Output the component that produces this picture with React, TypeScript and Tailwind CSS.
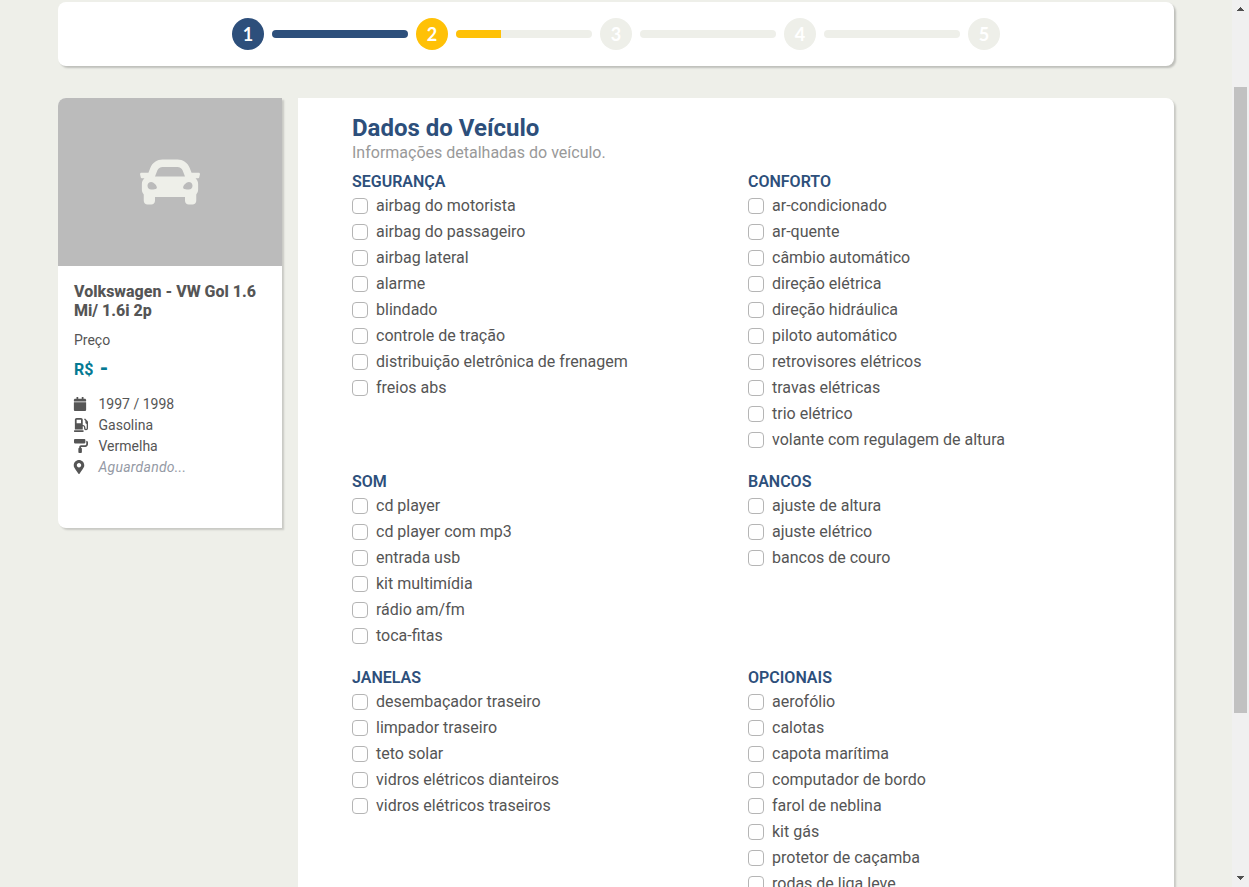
import { FaCalendar, FaCar, FaGasPump, FaMapMarkerAlt, FaPaintRoller } from "react-icons/fa";

const SECTIONS: { title: string; items: string[] }[] = [
  {
    title: "SEGURANÇA",
    items: ["airbag do motorista", "airbag do passageiro", "airbag lateral", "alarme", "blindado", "controle de tração", "distribuição eletrônica de frenagem", "freios abs"],
  },
  {
    title: "CONFORTO",
    items: ["ar-condicionado", "ar-quente", "câmbio automático", "direção elétrica", "direção hidráulica", "piloto automático", "retrovisores elétricos", "travas elétricas", "trio elétrico", "volante com regulagem de altura"],
  },
  { title: "SOM", items: ["cd player", "cd player com mp3", "entrada usb", "kit multimídia", "rádio am/fm", "toca-fitas"] },
  { title: "BANCOS", items: ["ajuste de altura", "ajuste elétrico", "bancos de couro"] },
  {
    title: "JANELAS",
    items: ["desembaçador traseiro", "limpador traseiro", "teto solar", "vidros elétricos dianteiros", "vidros elétricos traseiros"],
  },
  {
    title: "OPCIONAIS",
    items: ["aerofólio", "calotas", "capota marítima", "computador de bordo", "farol de neblina", "kit gás", "protetor de caçamba", "rodas de liga leve"],
  },
];

const STEPS = [
  { n: 1, circle: "bg-[#2d4f7b]", progress: 100, fill: "bg-[#2d4f7b]" },
  { n: 2, circle: "bg-[#ffc107]", progress: 33, fill: "bg-[#ffc107]" },
  { n: 3, circle: "bg-[#eeefe9]", progress: 0, fill: "" },
  { n: 4, circle: "bg-[#eeefe9]", progress: 0, fill: "" },
  { n: 5, circle: "bg-[#eeefe9]", progress: null, fill: "" },
];

function Stepper() {
  return (
    <div className="flex h-16 items-center justify-center gap-2 rounded-lg bg-white shadow-[2px_2px_2px_rgba(0,0,0,0.2)]">
      {STEPS.map((s) => (
        <div key={s.n} className="flex items-center gap-2">
          <div className={`flex size-8 items-center justify-center rounded-full font-['Lato',sans-serif] text-lg font-bold text-white ${s.circle}`}>
            {s.n}
          </div>
          {s.progress !== null && (
            <div className="h-2 w-[136px] overflow-hidden rounded-full bg-[#eeefe9]">
              <div className={`h-full ${s.fill}`} style={{ width: `${s.progress}%` }} />
            </div>
          )}
        </div>
      ))}
    </div>
  );
}

function VehicleCard() {
  return (
    <aside className="h-[430px] w-56 shrink-0 rounded-l-lg bg-white text-sm leading-[21px] shadow-[2px_2px_2px_rgba(0,0,0,0.16)]">
      <div className="flex h-[168px] items-center justify-center rounded-tl-lg bg-[#bbb]">
        <FaCar className="size-[60px] text-[#eeefe9]" />
      </div>
      <div className="px-4 pt-4">
        <h2 className="text-base leading-[19px] font-extrabold">Volkswagen - VW Gol 1.6 Mi/ 1.6i 2p</h2>
        <p className="mt-[10px]">Preço</p>
        <p className="mt-2 flex text-base leading-[21px] font-bold whitespace-pre text-[#057a93]">
          R$ <span className="ml-[2px] text-xl leading-[19px] font-black">-</span>
        </p>
        <ul className="mt-[14px]">
          <li className="flex items-center">
            <span className="w-[24.5px] pb-[2px]"><FaCalendar size={14} className="-ml-px" /></span>1997 / 1998
          </li>
          <li className="flex items-center">
            <span className="w-[24.5px] pb-[2px]"><FaGasPump size={14} /></span>Gasolina
          </li>
          <li className="flex items-center">
            <span className="w-[24.5px] pb-[2px]"><FaPaintRoller size={14} /></span>Vermelha
          </li>
          <li className="flex items-center">
            <span className="w-[24.5px] pb-[2px]"><FaMapMarkerAlt size={14} className="-ml-[1.75px]" /></span>
            <em className="tracking-[0.25px] text-[#959aa5]">Aguardando...</em>
          </li>
        </ul>
      </div>
    </aside>
  );
}

function Section({ title, items }: { title: string; items: string[] }) {
  return (
    <section>
      <h3 className="font-semibold text-[#2d4f7b]">{title}</h3>
      {items.map((label) => (
        <label key={label} className="flex h-[26px] items-start gap-2">
          <input type="checkbox" className="mt-1 size-4 appearance-none rounded-[4px] border border-[#b5b5b5] bg-white" />
          <span>{label}</span>
        </label>
      ))}
    </section>
  );
}

function Scrollbar() {
  return (
    <div className="flex w-[17px] shrink-0 flex-col items-center bg-[#f0f0f0]">
      <svg width="17" height="17" shapeRendering="crispEdges" fill="#505050"><path d="M8 7h1v1h1v1h1v1h1v1H5v-1h1V9h1V8h1z" /></svg>
      <div className="mt-[70px] h-[626px] w-[13px] bg-[#c1c1c1]" />
      <svg className="mt-auto" width="17" height="17" shapeRendering="crispEdges" fill="#505050"><path d="M5 6h7v1h-1v1h-1v1H9v1H8V9H7V8H6V7H5z" /></svg>
    </div>
  );
}

export default function App() {
  return (
    <div className="flex h-[887px] overflow-hidden bg-[#eeefe9] font-['Roboto',sans-serif] text-base leading-6 text-[#555]">
      <div className="min-w-0 flex-1 pt-[2px] pr-[58px] pl-[58px]">
        <Stepper />
        <div className="mt-8 flex items-start gap-4">
          <VehicleCard />
          <main className="h-[900px] flex-1 rounded-r-lg bg-white pt-4 pr-[30px] pl-[54px] shadow-[2px_2px_2px_rgba(0,0,0,0.16)]">
            <h1 className="text-2xl leading-7 font-bold text-[#2d4f7b]">Dados do Veículo</h1>
            <p className="-mt-px text-[#999]">Informações detalhadas do veículo.</p>
            <div className="mt-[5px] grid grid-cols-2 gap-y-4">
              {SECTIONS.map((s) => (
                <Section key={s.title} {...s} />
              ))}
            </div>
          </main>
        </div>
      </div>
      <Scrollbar />
    </div>
  );
}
